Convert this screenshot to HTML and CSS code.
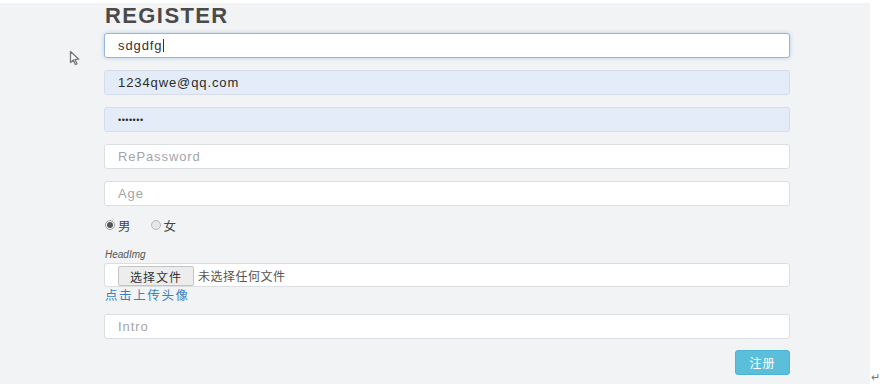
FILE: index.html
```html
<!DOCTYPE html>
<html lang="zh">
<head>
    <meta charset="UTF-8">
    <title>Register</title>
    <link rel="stylesheet" href="styles.css">
</head>
<body>
    <div class="screen">
        <main class="page">
            <!-- mouse pointer left in the capture -->
            <svg class="pointer" width="12" height="16" viewBox="0 0 12 16">
                <path d="M1.5 1.5 L1.5 12.5 L4.3 10 L6.4 14.5 L8 13.8 L6 9.4 L9.8 9.2 Z" fill="#fff" stroke="#777" stroke-width="1.3" stroke-linejoin="round"/>
            </svg>

            <form class="register">
                <h2 class="title">REGISTER</h2>

                <div class="field focus">sdgdfg<span class="caret"></span></div>
                <div class="field filled">1234qwe@qq.com</div>
                <div class="field filled dots">&bull;&bull;&bull;&bull;&bull;&bull;&bull;</div>
                <div class="field empty">RePassword</div>
                <div class="field empty">Age</div>

                <div class="sex">
                    <label class="radio"><span class="dot checked"></span>男</label>
                    <label class="radio"><span class="dot"></span>女</label>
                </div>

                <p class="small-label">HeadImg</p>
                <div class="field file">
                    <span class="file-btn">选择文件</span>
                    <span class="file-name">未选择任何文件</span>
                </div>
                <a class="upload-link" href="#">点击上传头像</a>

                <div class="field empty intro">Intro</div>

                <div class="actions">
                    <button type="button" class="btn-info">注册</button>
                </div>
            </form>
        </main>
        <span class="return-mark">&#8629;</span>
    </div>
</body>
</html>
```

FILE: styles.css
```css
/* Basic Reset */
* {
    margin: 0;
    padding: 0;
    box-sizing: border-box;
}

body {
    background: #fff;
    color: #555;
    font-family: 'Liberation Sans', 'Noto Sans CJK SC', sans-serif;
}

/* Screen / page frame */
.screen {
    display: flex;
    align-items: flex-end;
    padding-top: 2px;
    height: 384px;
}

.page {
    position: relative;
    width: 871px;
    height: 381px;
    background: #f2f3f5;
    padding: 1px 0 0 104px;
}

.pointer {
    position: absolute;
    left: 69px;
    top: 47px;
}

.return-mark {
    font-size: 11px;
    color: #777;
    line-height: 10px;
    padding-left: 1px;
    margin-bottom: 2px;
}

/* Form */
.register {
    width: 686px;
    display: flex;
    flex-direction: column;
}

.title {
    font-size: 22px;
    line-height: 24px;
    font-weight: bold;
    letter-spacing: 1.4px;
    color: #4a4a4a;
    padding-left: 1px;
    margin-bottom: 5px;
}

.field {
    height: 25px;
    display: flex;
    align-items: center;
    padding: 0 13px;
    margin-bottom: 12px;
    background: #fff;
    border: 1px solid #dcdfe2;
    border-radius: 3px;
    font-size: 13px;
    letter-spacing: 0.9px;
    color: #333;
}

.field.focus {
    border-color: #93b8dc;
    box-shadow: 0 0 4px rgba(102, 160, 220, 0.45);
}

.caret {
    display: inline-block;
    width: 1px;
    height: 13px;
    background: #333;
    margin-left: 1px;
}

.field.filled {
    background: #e3ecf8;
    border-color: #d6dde6;
    color: #2a2a2a;
}

.field.dots {
    font-size: 9px;
    letter-spacing: 0.5px;
}

.field.empty {
    color: #a3a6a9;
}

.field.intro {
    margin-bottom: 11px;
}

/* Radios */
.sex {
    display: flex;
    gap: 20px;
    height: 16px;
    margin: -1px 0 16px 1px;
}

.radio {
    display: flex;
    align-items: center;
    font-size: 12.5px;
    color: #444;
    font-family: 'Noto Sans CJK SC', sans-serif;
}

.dot {
    width: 10px;
    height: 10px;
    border-radius: 50%;
    border: 1px solid #b8bbbe;
    background: #e6e7e9;
    margin-right: 3px;
    display: flex;
    align-items: center;
    justify-content: center;
}

.dot.checked {
    border-color: #9a9da0;
    background: #fff;
}

.dot.checked::after {
    content: "";
    width: 6px;
    height: 6px;
    border-radius: 50%;
    background: #555;
}

.small-label {
    font-size: 10px;
    font-style: italic;
    color: #555;
    line-height: 12px;
    padding-left: 1px;
    margin-bottom: 2px;
}

/* Fake file input */
.field.file {
    height: 24px;
    margin-bottom: 0;
    padding: 0 0 0 13px;
    align-items: flex-end;
    letter-spacing: 0;
}

.file-btn {
    height: 20px;
    width: 76px;
    display: flex;
    align-items: center;
    justify-content: center;
    background: #ededed;
    border: 1px solid #c4c4c4;
    border-radius: 2px;
    font-family: 'Noto Sans CJK SC', sans-serif;
    font-size: 12px;
    letter-spacing: 1px;
    color: #333;
}

.file-name {
    align-self: center;
    margin-left: 4px;
    font-family: 'Noto Sans CJK SC', sans-serif;
    font-size: 12px;
    letter-spacing: 0.5px;
    color: #555;
}

.upload-link {
    font-family: 'Noto Sans CJK SC', sans-serif;
    font-size: 12.5px;
    line-height: 16px;
    letter-spacing: 1.6px;
    color: #3b7fc0;
    text-decoration: none;
    padding-left: 1px;
    margin-bottom: 11px;
}

/* Submit */
.actions {
    display: flex;
    justify-content: flex-end;
}

.btn-info {
    width: 55px;
    height: 25px;
    background: #5bbfdc;
    border: 1px solid #4fb3d2;
    border-radius: 3px;
    color: #fff;
    font-family: 'Noto Sans CJK SC', sans-serif;
    font-size: 12px;
    letter-spacing: 1px;
}
```
